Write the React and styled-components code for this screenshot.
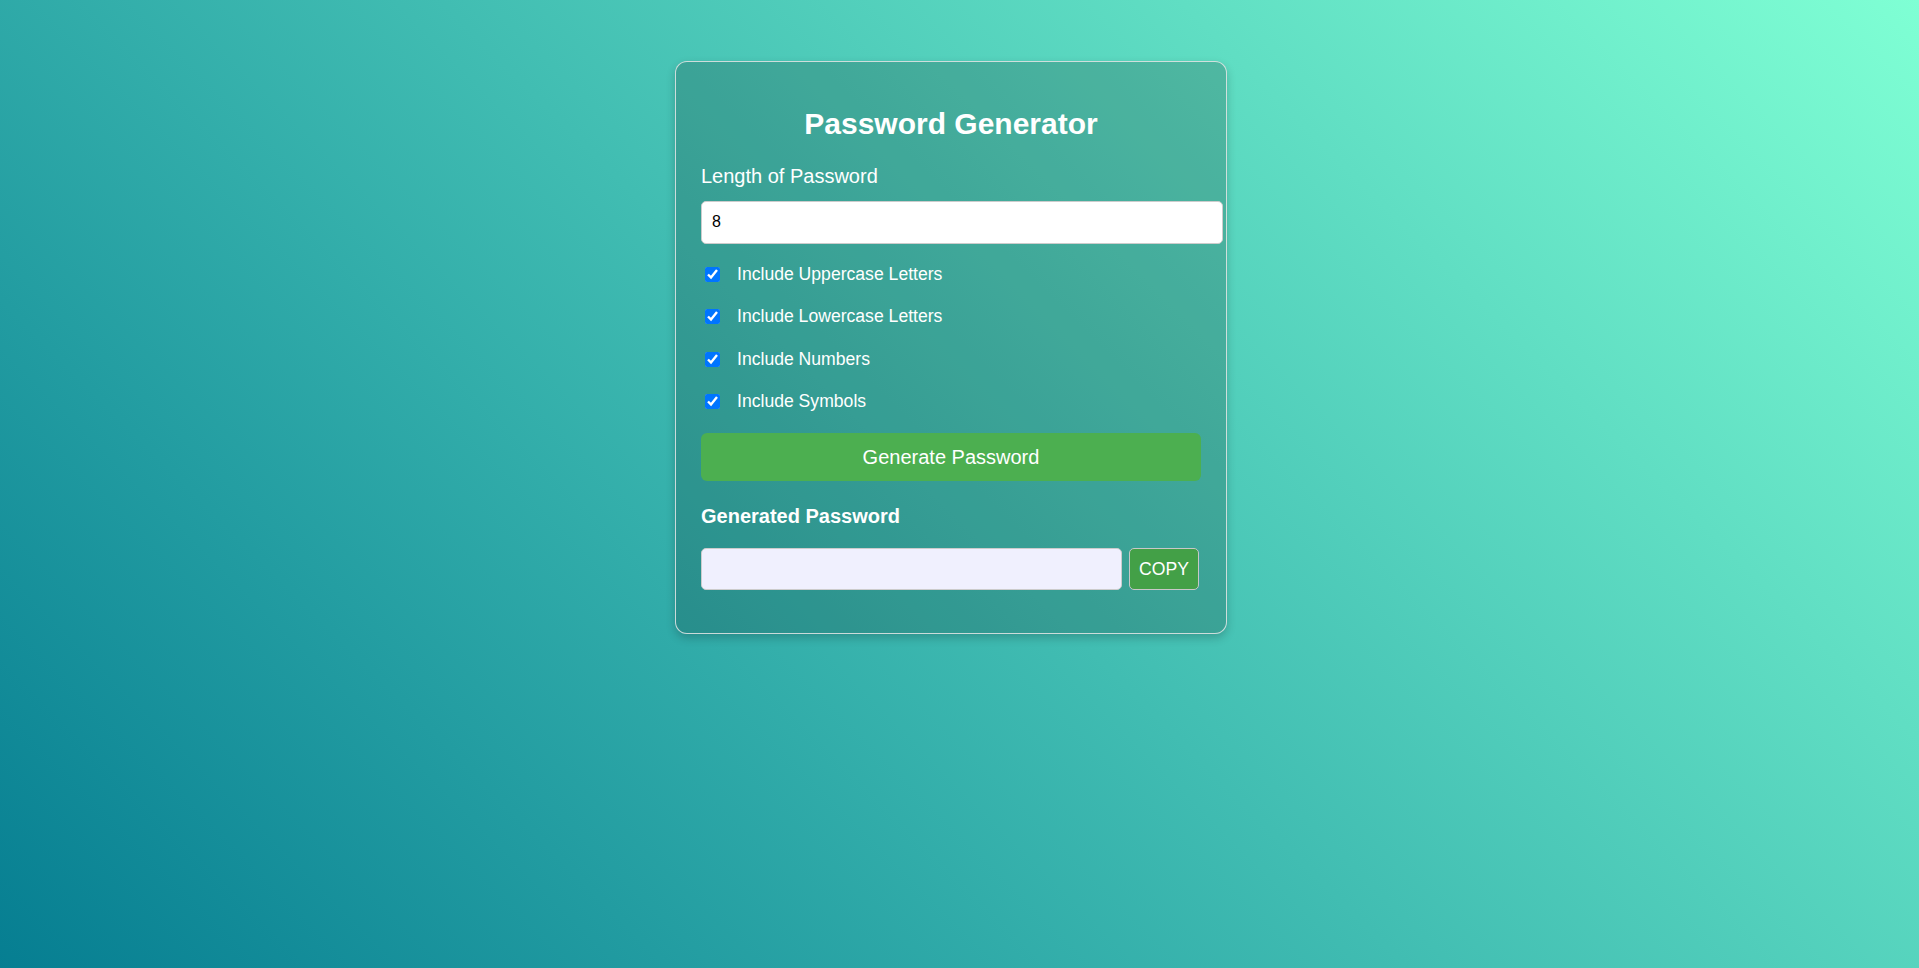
import React, { useState } from "react";
import styled, { createGlobalStyle } from "styled-components";

const GlobalStyle = createGlobalStyle`
  body {
    margin: 0;
    font-family: "Liberation Sans", Arial, sans-serif;
  }
`;

// right padding keeps the card centred where a 17px scrollbar would leave it
const Page = styled.div`
  min-height: 100vh;
  padding: 61px 17px 8px 0;
  background: linear-gradient(45deg, #037b90, #7fffd4);
`;

const Card = styled.div`
  width: 500px;
  margin: 0 auto;
  padding: 25px;
  border: 1px solid rgba(230, 230, 230, 0.85);
  border-radius: 12px;
  background: rgba(0, 0, 0, 0.17);
  box-shadow: 0 4px 10px rgba(0, 0, 0, 0.2);
  color: #fff;
`;

const Title = styled.h1`
  margin: 20px 0 23px;
  font-size: 30px;
  line-height: 34.5px;
  font-weight: bold;
  text-align: center;
`;

const FieldLabel = styled.label`
  display: block;
  font-size: 20px;
  line-height: 23px;
  margin-bottom: 13px;
`;

const LengthInput = styled.input`
  display: block;
  width: 100%;
  height: 41px;
  padding: 0 10px;
  margin: 0;
  border: 1px solid #ccc;
  border-radius: 5px;
  background: #fff;
  font-family: "Liberation Sans", Arial, sans-serif;
  font-size: 16px;
  color: #000;
  outline: none;
`;

const Options = styled.div`
  display: flex;
  flex-direction: column;
  gap: 22.5px;
  margin-top: 20.5px;
`;

const Option = styled.label`
  display: flex;
  align-items: center;
  height: 20px;
  font-size: 17.6px;
  color: #fff;
`;

const Check = styled.input`
  width: 15px;
  height: 15px;
  margin: 0 17px 0 4px;
`;

const GenerateButton = styled.button`
  display: block;
  width: 100%;
  height: 48px;
  margin-top: 21.5px;
  border: none;
  border-radius: 6px;
  background: #4caf50;
  color: #fff;
  font-family: "Liberation Sans", Arial, sans-serif;
  font-size: 20px;
  cursor: pointer;
`;

const ResultTitle = styled.h3`
  margin: 24px 0 20px;
  font-size: 20px;
  line-height: 23px;
  font-weight: bold;
`;

const ResultRow = styled.div`
  display: flex;
  gap: 7px;
  margin: 0 2px 18px 0;
`;

const ResultInput = styled.input`
  flex: 1;
  min-width: 0;
  box-sizing: border-box;
  height: 42px;
  margin: 0;
  padding: 0 10px;
  border: 1px solid #ccc;
  border-radius: 5px;
  background: #f0f0fe;
  font-family: "Liberation Sans", Arial, sans-serif;
  font-size: 16px;
  outline: none;
`;

const CopyButton = styled.button`
  box-sizing: border-box;
  width: 70px;
  height: 42px;
  border: 1px solid #c8c8c8;
  border-radius: 5px;
  background: #43a047;
  color: #fff;
  font-family: "Liberation Sans", Arial, sans-serif;
  font-size: 17.6px;
  cursor: pointer;
`;

const optionList = [
  "Include Uppercase Letters",
  "Include Lowercase Letters",
  "Include Numbers",
  "Include Symbols",
];

export default function App() {
  const [length, setLength] = useState("8");
  const [checks, setChecks] = useState([true, true, true, true]);
  const [password, setPassword] = useState("");

  const generate = () => {
    const sets = [
      "ABCDEFGHIJKLMNOPQRSTUVWXYZ",
      "abcdefghijklmnopqrstuvwxyz",
      "0123456789",
      "!@#$%^&*()_+-=[]{}",
    ];
    const pool = sets.filter((s, i) => checks[i]).join("");
    if (!pool) return;
    let out = "";
    for (let i = 0; i < Number(length); i++) {
      out += pool[Math.floor(Math.random() * pool.length)];
    }
    setPassword(out);
  };

  return (
    <Page>
      <GlobalStyle />
      <Card>
        <Title>Password Generator</Title>
        <FieldLabel htmlFor="len">Length of Password</FieldLabel>
        <LengthInput
          id="len"
          type="text"
          value={length}
          onChange={(e) => setLength(e.target.value)}
        />
        <Options>
          {optionList.map((text, i) => (
            <Option key={text}>
              <Check
                type="checkbox"
                checked={checks[i]}
                onChange={() =>
                  setChecks(checks.map((c, j) => (j === i ? !c : c)))
                }
              />
              {text}
            </Option>
          ))}
        </Options>
        <GenerateButton onClick={generate}>Generate Password</GenerateButton>
        <ResultTitle>Generated Password</ResultTitle>
        <ResultRow>
          <ResultInput type="text" value={password} readOnly />
          <CopyButton>COPY</CopyButton>
        </ResultRow>
      </Card>
    </Page>
  );
}
